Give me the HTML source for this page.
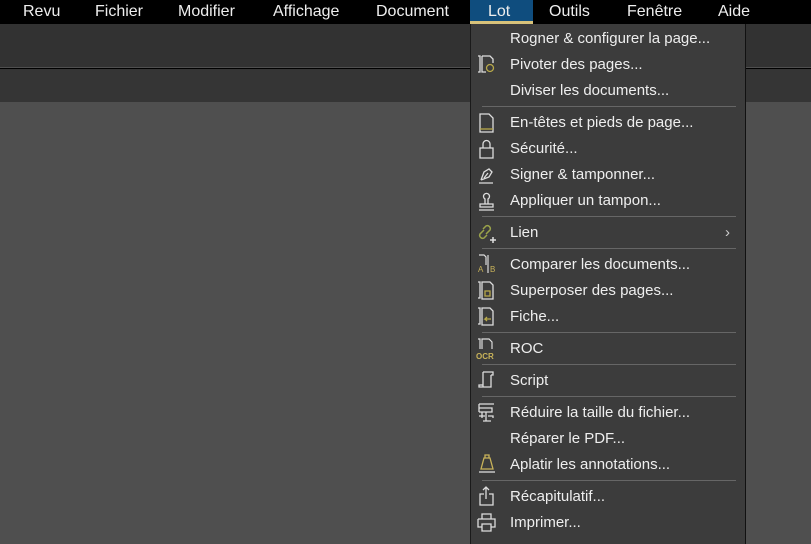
<!DOCTYPE html>
<html><head><meta charset="utf-8"><style>
*{margin:0;padding:0;box-sizing:border-box}
body{width:811px;height:536px;overflow:hidden;background:#4f4f4f;font-family:"Liberation Sans",sans-serif;position:relative}
.bar{position:absolute;left:0;top:0;width:811px;height:24px;background:#000}
.bar span{position:absolute;top:3px;color:#eee;font-size:16px}
.tb{position:absolute;left:0;top:24px;width:811px;height:43px;background:#323232}
.tb2{position:absolute;left:0;top:68px;width:811px;height:34px;background:#353535;border-top:1px solid #000}
.lot{position:absolute;left:470px;top:0;width:63px;height:24px;background:#0f4d7e;border-bottom:3px solid #d8c27a}
.menu{position:absolute;left:470px;top:24px;width:276px;height:520px;background:#3c3c3c;border-left:1px solid #1a1a1a;border-right:1px solid #111}
.it{position:absolute;left:39px;color:#eee;font-size:15px;line-height:18px;margin-top:2px}
.sep{position:absolute;left:11px;width:254px;height:1px;background:#666}
svg{position:absolute;left:5px}
</style></head><body>
<div class="bar">
<span style="left:23px">Revu</span><span style="left:95px">Fichier</span><span style="left:178px">Modifier</span><span style="left:273px">Affichage</span><span style="left:376px">Document</span>
<div class="lot"></div>
<span style="left:488px">Lot</span><span style="left:549px">Outils</span><span style="left:627px">Fenêtre</span><span style="left:718px">Aide</span>
</div>
<div class="tb"></div><div class="tb2"></div>
<div class="menu">
<div class="it" style="top:4px">Rogner &amp; configurer la page...</div>
<svg style="top:29px" width="22" height="22" viewBox="0 0 22 22" fill="none" stroke="#ddd" stroke-width="1.3"><path d="M2 3h2v16H2M6 3h8l3 3v4M6 3v16h4"/><circle cx="14" cy="15" r="3.5" stroke="#b8a94a"/></svg>
<div class="it" style="top:30px">Pivoter des pages...</div>
<div class="it" style="top:56px">Diviser les documents...</div>
<div class="sep" style="top:82px"></div>
<svg style="top:88px" width="22" height="22" viewBox="0 0 22 22" fill="none" stroke="#ddd" stroke-width="1.3"><path d="M4 2h9l4 4v14H4z"/><path d="M4 17h13" stroke="#b8a94a"/></svg>
<div class="it" style="top:88px">En-têtes et pieds de page...</div>
<svg style="top:114px" width="22" height="22" viewBox="0 0 22 22" fill="none" stroke="#ddd" stroke-width="1.3"><path d="M4 10h13v10H4zM7 10V6a3.5 3.5 0 0 1 7 0v4"/></svg>
<div class="it" style="top:114px">Sécurité...</div>
<svg style="top:140px" width="22" height="22" viewBox="0 0 22 22" fill="none" stroke="#ddd" stroke-width="1.3"><path d="M3 19h14M5 16l3-8 5-3 3 3-3 5-8 3M12 9l-4 5"/></svg>
<div class="it" style="top:140px">Signer &amp; tamponner...</div>
<svg style="top:166px" width="22" height="22" viewBox="0 0 22 22" fill="none" stroke="#ddd" stroke-width="1.3"><path d="M3 20h15M4 17v-3h13v3zM9 14V9a3 3 0 1 1 3 0v5"/></svg>
<div class="it" style="top:166px">Appliquer un tampon...</div>
<div class="sep" style="top:192px"></div>
<svg style="top:197px" width="22" height="24" viewBox="0 0 22 24" fill="none" stroke="#9aa34a" stroke-width="1.5"><path d="M8 9l-4 4a3 3 0 0 0 4 4l3-3M10 13l4-4a3 3 0 0 0-4-4l-3 3"/><path d="M17 16v6M14 19h6" stroke="#ddd"/></svg>
<div class="it" style="top:198px">Lien</div>
<div class="it" style="top:198px;left:254px;color:#ccc">›</div>
<div class="sep" style="top:224px"></div>
<svg style="top:229px" width="24" height="22" viewBox="0 0 24 22" fill="none" stroke="#ddd" stroke-width="1.2"><path d="M3 2h5l2 2v8M12 2v18"/><text x="2" y="19" font-size="8" fill="#c9b35a" stroke="none" font-family="Liberation Sans">A</text><text x="14" y="19" font-size="8" fill="#c9b35a" stroke="none" font-family="Liberation Sans">B</text></svg>
<div class="it" style="top:230px">Comparer les documents...</div>
<svg style="top:255px" width="22" height="22" viewBox="0 0 22 22" fill="none" stroke="#ddd" stroke-width="1.3"><path d="M2 3h2v16H2M6 3h8l3 3v14H6z"/><path d="M9 12h5v5H9z" stroke="#b8a94a"/></svg>
<div class="it" style="top:256px">Superposer des pages...</div>
<svg style="top:281px" width="22" height="22" viewBox="0 0 22 22" fill="none" stroke="#ddd" stroke-width="1.3"><path d="M2 3h2v16H2M6 3h8l3 3v14H6z"/><path d="M15 14h-6l2-2M9 14l2 2" stroke="#b8a94a"/></svg>
<div class="it" style="top:282px">Fiche...</div>
<div class="sep" style="top:308px"></div>
<svg style="top:313px" width="24" height="24" viewBox="0 0 24 24" fill="none" stroke="#ddd" stroke-width="1.2"><path d="M2 2h2v10M6 12V2h7l3 3v7"/><text x="0" y="22" font-size="8" font-weight="bold" fill="#c9b35a" stroke="none" font-family="Liberation Sans">OCR</text></svg>
<div class="it" style="top:314px">ROC</div>
<div class="sep" style="top:340px"></div>
<svg style="top:345px" width="22" height="22" viewBox="0 0 22 22" fill="none" stroke="#ddd" stroke-width="1.3"><path d="M7 3h10v3M7 3v15H3v-2h4M7 18h8V6M17 3v3h-2"/></svg>
<div class="it" style="top:346px">Script</div>
<div class="sep" style="top:372px"></div>
<svg style="top:377px" width="22" height="22" viewBox="0 0 22 22" fill="none" stroke="#ddd" stroke-width="1.3"><path d="M3 3h15M3 3v8M3 7h13v4H3M6 11v6M3 15h6M10 11v9M7 20h8M12 15h5v2"/></svg>
<div class="it" style="top:378px">Réduire la taille du fichier...</div>
<div class="it" style="top:404px">Réparer le PDF...</div>
<svg style="top:428px" width="22" height="22" viewBox="0 0 22 22" fill="none" stroke="#c9b35a" stroke-width="1.3"><path d="M8 6h6l3 11H5zM9 6V3h4v3"/><path d="M3 20h16" stroke="#ddd"/></svg>
<div class="it" style="top:430px">Aplatir les annotations...</div>
<div class="sep" style="top:456px"></div>
<svg style="top:461px" width="22" height="22" viewBox="0 0 22 22" fill="none" stroke="#ddd" stroke-width="1.3"><path d="M8 9H4v11h13V9h-4M10 14V2M7 5l3-3 3 3"/></svg>
<div class="it" style="top:462px">Récapitulatif...</div>
<svg style="top:487px" width="22" height="22" viewBox="0 0 22 22" fill="none" stroke="#ddd" stroke-width="1.3"><path d="M6 8V3h9v5M2 8h17v8h-4M6 16H2V8M6 13h9v7H6z"/></svg>
<div class="it" style="top:488px">Imprimer...</div>
</div>
</body></html>
